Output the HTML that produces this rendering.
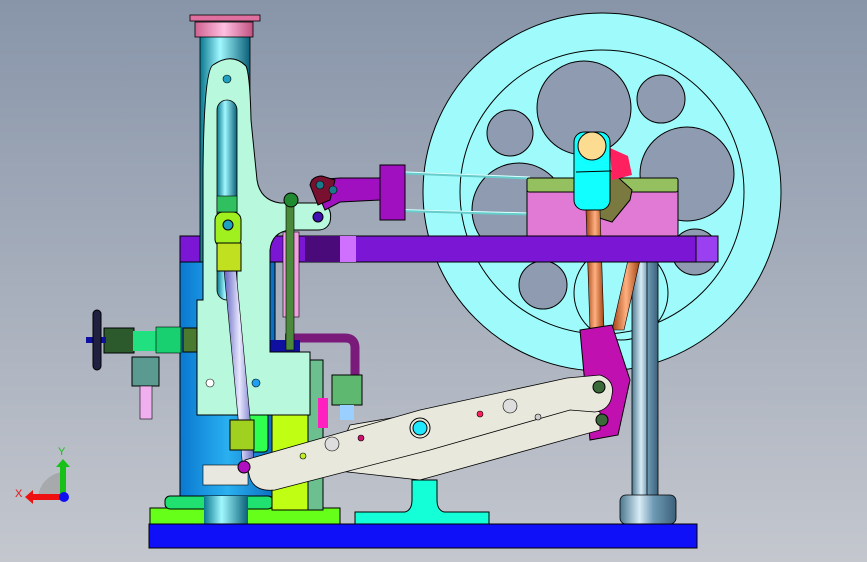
<!DOCTYPE html>
<html><head><meta charset="utf-8"><style>
html,body{margin:0;padding:0;width:867px;height:562px;overflow:hidden}
svg{display:block}
</style></head><body>
<svg width="867" height="562" viewBox="0 0 867 562" xmlns="http://www.w3.org/2000/svg" font-family="Liberation Sans, sans-serif">
<defs>
<linearGradient id="bg" x1="0" y1="0" x2="0" y2="1"><stop offset="0" stop-color="#8895a9"/><stop offset="1" stop-color="#c4c7ce"/></linearGradient>
<linearGradient id="steel" x1="0" x2="1"><stop offset="0" stop-color="#4c7890"/><stop offset=".35" stop-color="#d8ecf6"/><stop offset=".6" stop-color="#6e9ab4"/><stop offset="1" stop-color="#3c607a"/></linearGradient>
<linearGradient id="col" x1="0" x2="1"><stop offset="0" stop-color="#0a78d0"/><stop offset=".5" stop-color="#2ab0f0"/><stop offset="1" stop-color="#0a6cc0"/></linearGradient>
<linearGradient id="cyc" x1="0" x2="1"><stop offset="0" stop-color="#0a7890"/><stop offset=".4" stop-color="#a0f8ff"/><stop offset="1" stop-color="#0a6078"/></linearGradient>
<linearGradient id="cop" x1="0" x2="1"><stop offset="0" stop-color="#a04010"/><stop offset=".5" stop-color="#ffb080"/><stop offset="1" stop-color="#a04010"/></linearGradient>
<linearGradient id="rod" x1="0" x2="1"><stop offset="0" stop-color="#6060c0"/><stop offset=".5" stop-color="#e8e8ff"/><stop offset="1" stop-color="#6060c0"/></linearGradient>
<linearGradient id="pink" x1="0" x2="1"><stop offset="0" stop-color="#d06090"/><stop offset=".5" stop-color="#ffc0e0"/><stop offset="1" stop-color="#c05080"/></linearGradient>
</defs>
<rect width="867" height="562" fill="url(#bg)"/>

<!-- flywheel -->
<circle cx="602" cy="192" r="179" fill="#9ffbfb" stroke="#000" stroke-width="1"/>
<circle cx="602" cy="192" r="142" fill="none" stroke="#000" stroke-width="1"/>
<g fill="#8f9bb0" stroke="#000" stroke-width="1">
<circle cx="584" cy="108" r="47"/><circle cx="661" cy="99" r="24"/><circle cx="510" cy="133" r="23"/>
<circle cx="687" cy="174" r="47"/><circle cx="519" cy="210" r="47"/><circle cx="695" cy="252" r="23"/>
<circle cx="543" cy="285" r="24"/>
</g>
<circle cx="621" cy="293" r="47" fill="none" stroke="#000"/>

<!-- right column -->
<rect x="632" y="250" width="26" height="250" fill="url(#steel)" stroke="#000" stroke-width=".8"/>
<line x1="647" y1="250" x2="647" y2="524" stroke="#000" stroke-width=".8"/>
<rect x="620" y="495" width="56" height="29" rx="6" fill="url(#steel)" stroke="#000" stroke-width=".8"/>

<!-- rods to crosshead -->
<g stroke="#6cc" stroke-width="3"><line x1="380" y1="172" x2="530" y2="178"/><line x1="380" y1="210" x2="530" y2="214"/></g>
<g stroke="#dff" stroke-width="1"><line x1="380" y1="171" x2="530" y2="177"/><line x1="380" y1="209" x2="530" y2="213"/></g>

<!-- pink block -->
<rect x="527" y="190" width="151" height="48" fill="#e07ad4" stroke="#000"/>
<rect x="527" y="178" width="151" height="14" rx="2" fill="#94c060" stroke="#000"/>
<path d="M578 145 L610 170 L632 190 L630 200 L612 222 L590 215 Z" fill="#7a7a40" stroke="#000"/>
<path d="M610 148 L628 156 L632 175 L612 180 Z" fill="#ff2060"/>
<!-- copper rods -->
<path d="M586 210 L600 210 L604 330 L590 330 Z" fill="url(#cop)" stroke="#000" stroke-width=".6"/>
<path d="M628 260 L640 260 L624 330 L612 330 Z" fill="url(#cop)" stroke="#000" stroke-width=".6"/>
<!-- cyan eye -->
<rect x="574" y="132" width="36" height="78" rx="10" fill="#12ffff" stroke="#000"/>
<line x1="576" y1="172" x2="610" y2="171" stroke="#000"/>
<circle cx="592" cy="146" r="14" fill="#fbdc90" stroke="#000"/>

<!-- purple bar -->
<rect x="180" y="236" width="537" height="26" fill="#7a16d4" stroke="#000"/>
<rect x="696" y="236" width="22" height="26" fill="#9a40f0" stroke="#000"/>
<rect x="305" y="236" width="40" height="26" fill="#4a0a7a"/>
<rect x="340" y="236" width="16" height="26" fill="#d070ff"/>

<!-- tall column -->
<rect x="200" y="35" width="50" height="465" fill="url(#cyc)" stroke="#000" stroke-width=".8"/>
<rect x="180" y="262" width="95" height="240" fill="url(#col)" stroke="#000"/>
<rect x="195" y="22" width="58" height="15" fill="url(#pink)" stroke="#000" stroke-width=".8"/>
<rect x="190" y="15" width="70" height="6" fill="#e070a0" stroke="#000" stroke-width=".8"/>

<!-- left pipe -->
<rect x="104" y="328" width="30" height="25" fill="#2c5a2c" stroke="#000"/>
<rect x="133" y="331" width="24" height="20" fill="#20e080"/>
<rect x="156" y="327" width="25" height="26" fill="#18d070" stroke="#000" stroke-width=".6"/>
<rect x="183" y="328" width="15" height="24" fill="#4a7a30" stroke="#000"/>
<rect x="132" y="357" width="27" height="29" fill="#5a9a90" stroke="#000"/>
<rect x="140" y="386" width="12" height="33" fill="#f0b0f0" stroke="#000" stroke-width=".6"/>
<rect x="86" y="337" width="20" height="6" fill="#1010a0"/>
<rect x="93" y="310" width="8" height="60" rx="4" fill="#202040" stroke="#000"/>

<!-- green base pieces -->
<rect x="150" y="508" width="190" height="16" fill="#66ff1a" stroke="#000"/>
<rect x="165" y="496" width="108" height="13" rx="5" fill="#20e070" stroke="#000"/>
<rect x="204" y="496" width="44" height="28" fill="url(#cyc)"/>
<path d="M355 512 L405 512 Q412 510 412 500 L412 480 L437 480 L437 500 Q437 510 444 512 L489 512 L489 524 L355 524 Z" fill="#14ffd8" stroke="#000"/>
<rect x="149" y="524" width="548" height="24" fill="#1010f8" stroke="#000"/>

<!-- yellow-green blocks -->
<rect x="272" y="400" width="45" height="110" fill="#c0ff14" stroke="#000"/>
<rect x="308" y="360" width="15" height="150" fill="#6cc090" stroke="#000"/>
<rect x="246" y="407" width="22" height="45" rx="4" fill="#30ff50" stroke="#000"/>
<rect x="318" y="398" width="10" height="30" fill="#ff20c0"/>
<!-- purple pipe -->
<path d="M285 338 L345 338 Q355 338 355 348 L355 378" fill="none" stroke="#7a1a7a" stroke-width="9"/>
<rect x="332" y="375" width="30" height="30" fill="#5fb870" stroke="#000"/>
<rect x="340" y="405" width="14" height="15" fill="#9ad0ff"/>
<rect x="270" y="340" width="30" height="15" fill="#1010a0"/>

<!-- mint frame -->
<path d="M203 300 L203 170 Q204 70 213 65 Q232 52 246 66 Q250 75 251 120 L257 180 Q260 200 280 203 L322 203 Q333 208 330 222 Q327 230 318 230 L290 230 Q272 232 270 250 L270 352 L310 352 L310 415 L197 415 L197 300 Z" fill="#b8f8dc" stroke="#000"/>
<rect x="217" y="100" width="20" height="200" rx="10" fill="url(#cyc)" stroke="#000" stroke-width=".8"/>
<circle cx="227" cy="79" r="4" fill="#20a0c0" stroke="#000" stroke-width=".6"/>
<circle cx="318" cy="217" r="5" fill="#4010b0" stroke="#000"/>
<circle cx="210" cy="383" r="4" fill="#fff" stroke="#000" stroke-width=".6"/>
<circle cx="256" cy="383" r="4" fill="#20a0f0" stroke="#000" stroke-width=".6"/>
<!-- valve rod & linkage -->
<rect x="283" y="232" width="16" height="85" fill="#f0a0e0" stroke="#000" stroke-width=".6"/>
<rect x="286" y="200" width="8" height="150" fill="#4a8a3a" stroke="#000" stroke-width=".6"/>
<circle cx="291" cy="200" r="7" fill="#208a30" stroke="#000"/>
<path d="M312 180 L340 178 L380 178 L380 200 L340 202 L325 210 Z" fill="#a010c0" stroke="#000"/>
<path d="M310 185 Q312 176 322 176 L335 180 L330 200 L318 205 Z" fill="#7a1030" stroke="#000"/>
<circle cx="320" cy="185" r="4" fill="#1a7a8a" stroke="#000" stroke-width=".6"/>
<circle cx="333" cy="190" r="4" fill="#1a7a8a" stroke="#000" stroke-width=".6"/>
<rect x="380" y="165" width="25" height="55" fill="#a010c0" stroke="#000"/>

<!-- piston rod -->
<path d="M224 270 L236 270 L255 470 L243 470 Z" fill="url(#rod)" stroke="#000" stroke-width=".6"/>
<rect x="215" y="212" width="26" height="35" rx="8" fill="#a0f020" stroke="#000"/>
<rect x="217" y="243" width="24" height="28" fill="#c0e020" stroke="#000"/>
<circle cx="228" cy="225" r="5" fill="#20a0c0" stroke="#000"/>
<rect x="217" y="196" width="20" height="16" fill="#30c060" stroke="#000" stroke-width=".6"/>
<rect x="230" y="420" width="24" height="30" fill="#a0d020" stroke="#000"/>
<rect x="203" y="465" width="45" height="20" fill="#e8e8e0" stroke="#000" stroke-width=".6"/>

<!-- magenta bellcrank -->
<path d="M580 330 L612 325 L630 380 L618 435 L590 440 Z" fill="#c010b0" stroke="#000"/>
<!-- beige levers -->
<g fill="#e8e8dc" stroke="#000" stroke-width=".8">
<path d="M350 425 L415 414 L565 400 L600 412 L600 430 L420 480 L330 470 Z"/>
<path d="M245 460 L420 410 L567 378 L600 375 Q615 380 612 395 Q610 410 595 412 L570 410 L430 450 L275 490 Q255 492 250 478 Z"/>
</g>
<circle cx="244" cy="467" r="6" fill="#b010c0" stroke="#000"/>
<circle cx="599" cy="387" r="6" fill="#3a6a3a" stroke="#000"/>
<circle cx="602" cy="420" r="6" fill="#3a6a3a" stroke="#000"/>
<circle cx="420" cy="428" r="10" fill="none" stroke="#000"/>
<circle cx="420" cy="428" r="7" fill="#20e8ff" stroke="#000"/>
<circle cx="303" cy="456" r="3" fill="#c0f020" stroke="#000" stroke-width=".6"/>
<circle cx="332" cy="444" r="7" fill="#ddd" stroke="#000" stroke-width=".6"/>
<circle cx="361" cy="438" r="3" fill="#d01070" stroke="#000" stroke-width=".6"/>
<circle cx="480" cy="414" r="3" fill="#ff2060" stroke="#000" stroke-width=".6"/>
<circle cx="510" cy="406" r="7" fill="#ddd" stroke="#000" stroke-width=".6"/>
<circle cx="538" cy="417" r="3" fill="#ccc" stroke="#000" stroke-width=".6"/>

<!-- axis triad -->
<path d="M38 497 A28 28 0 0 1 62 472 L62 497 Z" fill="#999" opacity=".6"/>
<rect x="60" y="466" width="6" height="30" fill="#18c018"/>
<path d="M56 467 L63 459 L70 467 Z" fill="#18c018"/>
<rect x="32" y="494" width="30" height="6" fill="#ee1010"/>
<path d="M33 490 L25 497 L33 504 Z" fill="#ee1010"/>
<circle cx="64" cy="497" r="5" fill="#1010ee"/>
<text x="58" y="455" font-size="11" fill="#18c018">Y</text>
<text x="15" y="497" font-size="11" fill="#ee1010">X</text>
</svg>
</body></html>
